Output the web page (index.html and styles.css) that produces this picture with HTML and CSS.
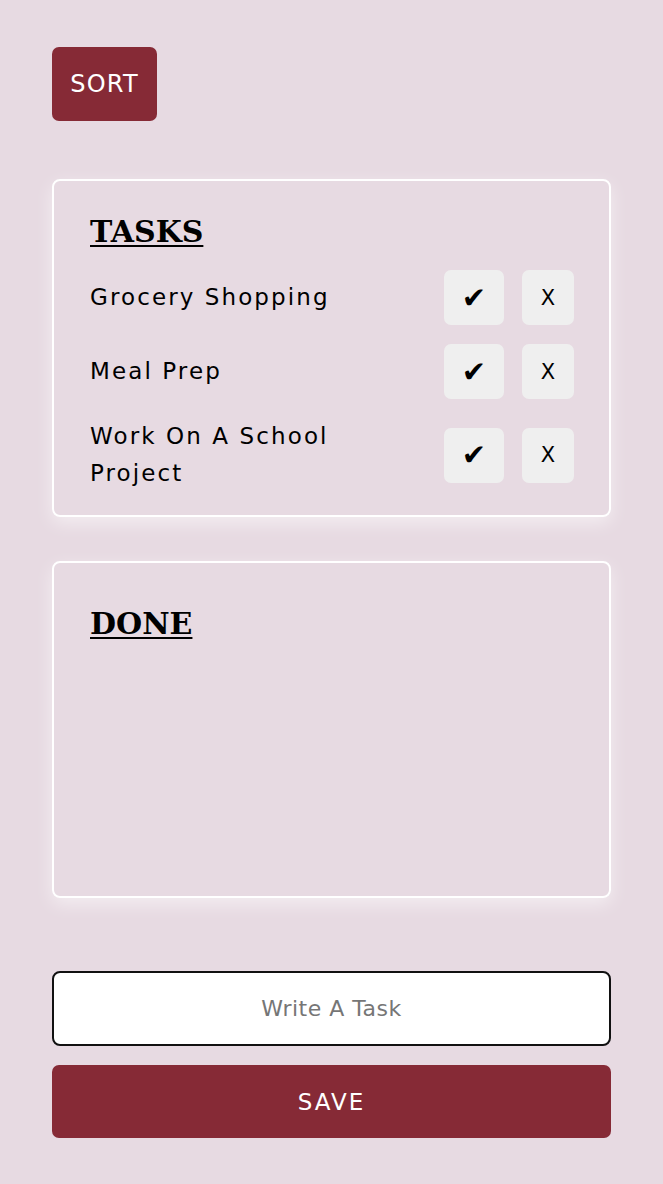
FILE: index.html
```html
<!DOCTYPE html>
<html lang="en">
<head>
<meta charset="utf-8">
<title>Tasks</title>
<link rel="stylesheet" href="styles.css">
</head>
<body>
<main class="app">
  <button class="sort-btn" type="button">SORT</button>

  <section class="card tasks-card">
    <h2 class="card-title">TASKS</h2>
    <ul class="task-list">
      <li class="task-row">
        <span class="task-text">Grocery Shopping</span>
        <span class="task-actions">
          <button class="icon-btn check-btn" type="button">✔</button>
          <button class="icon-btn del-btn" type="button">X</button>
        </span>
      </li>
      <li class="task-row">
        <span class="task-text">Meal Prep</span>
        <span class="task-actions">
          <button class="icon-btn check-btn" type="button">✔</button>
          <button class="icon-btn del-btn" type="button">X</button>
        </span>
      </li>
      <li class="task-row">
        <span class="task-text">Work On A School Project</span>
        <span class="task-actions">
          <button class="icon-btn check-btn" type="button">✔</button>
          <button class="icon-btn del-btn" type="button">X</button>
        </span>
      </li>
    </ul>
  </section>

  <section class="card done-card">
    <h2 class="card-title">DONE</h2>
  </section>

  <form class="task-form">
    <input class="task-input" type="text" placeholder="Write A Task">
    <button class="save-btn" type="button">SAVE</button>
  </form>
</main>
</body>
</html>
```

FILE: styles.css
```css
* {
  box-sizing: border-box;
}

html, body {
  margin: 0;
  padding: 0;
  background: #e7dae2;
}

body {
  font-family: "DejaVu Sans", "Open Sans", sans-serif;
  color: #000;
}

.app {
  padding: 47px 52px 40px;
  display: flex;
  flex-direction: column;
  align-items: stretch;
}

.sort-btn {
  align-self: flex-start;
  width: 105px;
  height: 74px;
  border: none;
  border-radius: 7px;
  background: #862a36;
  color: #fff;
  font-family: "DejaVu Sans", sans-serif;
  font-size: 24px;
  letter-spacing: 1.2px;
  padding: 0;
  margin-bottom: 58px;
}

.card {
  border: 2px solid #fff;
  border-radius: 8px;
  box-shadow: 0 6px 18px rgba(255, 255, 255, 0.55);
  padding: 31px 35px 23px 36px;
}

.tasks-card {
  margin-bottom: 44px;
}

.done-card {
  height: 337px;
  padding-top: 41px;
  margin-bottom: 73px;
}

.card-title {
  margin: 0 0 18px;
  font-family: "DejaVu Serif", "Liberation Serif", serif;
  font-weight: bold;
  font-size: 30px;
  line-height: 40px;
  text-decoration: underline;
  text-decoration-thickness: 2px;
  text-underline-offset: 3px;
}

.task-list {
  list-style: none;
  margin: 0;
  padding: 0;
  display: flex;
  flex-direction: column;
  gap: 19px;
}

.task-row {
  display: flex;
  align-items: center;
  justify-content: space-between;
}

.task-text {
  flex: 0 1 310px;
  font-size: 23px;
  line-height: 37px;
  letter-spacing: 2.1px;
}

.task-actions {
  display: flex;
  gap: 18px;
}

.icon-btn {
  height: 55px;
  border: none;
  border-radius: 7px;
  background: #efefef;
  color: #000;
  padding: 0;
  font-family: "DejaVu Sans", sans-serif;
}

.check-btn {
  width: 60px;
  font-size: 29px;
}

.del-btn {
  width: 52px;
  font-size: 21px;
}

.task-form {
  display: flex;
  flex-direction: column;
  gap: 19px;
}

.task-input {
  height: 75px;
  border: 2px solid #111;
  border-radius: 8px;
  background: #fff;
  text-align: center;
  font-family: "DejaVu Sans", sans-serif;
  font-size: 22px;
  letter-spacing: 0.5px;
  outline: none;
}

.task-input::placeholder {
  color: #767676;
}

.save-btn {
  height: 73px;
  border: none;
  border-radius: 7px;
  background: #862a36;
  color: #fff;
  font-family: "DejaVu Sans", sans-serif;
  font-size: 23px;
  letter-spacing: 2px;
}
```
